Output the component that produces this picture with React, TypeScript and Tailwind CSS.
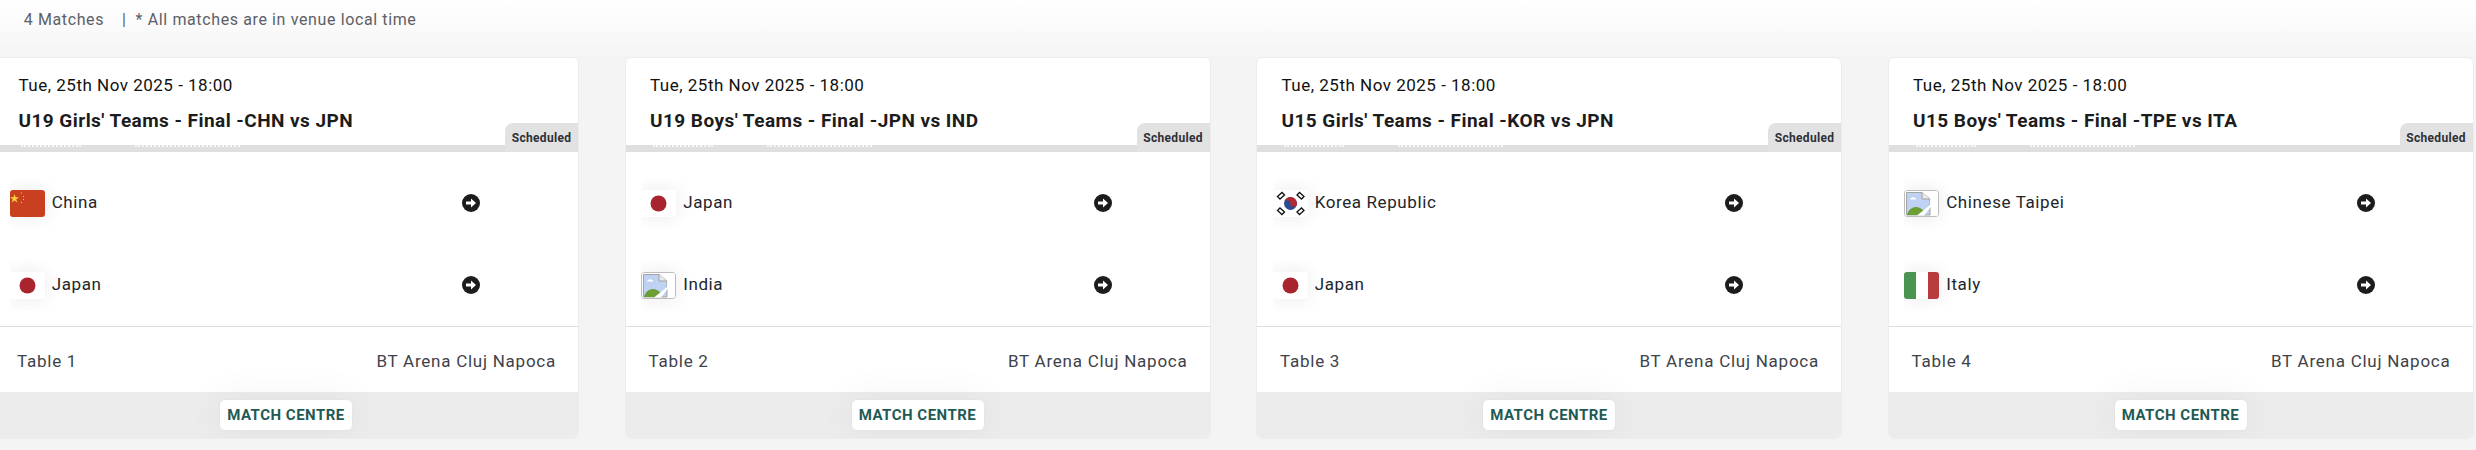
import React from 'react';

const matches = [
  { title: "U19 Girls' Teams - Final -CHN vs JPN", home: 'China', away: 'Japan', table: 'Table 1' },
  { title: "U19 Boys' Teams - Final -JPN vs IND", home: 'Japan', away: 'India', table: 'Table 2' },
  { title: "U15 Girls' Teams - Final -KOR vs JPN", home: 'Korea Republic', away: 'Japan', table: 'Table 3' },
  { title: "U15 Boys' Teams - Final -TPE vs ITA", home: 'Chinese Taipei', away: 'Italy', table: 'Table 4' },
];

function Flag({ name }: { name: string }) {
  switch (name) {
    case 'China':
      return (
        <svg viewBox="0 0 35 27" className="block w-full h-full">
          <rect width="35" height="27" fill="#c8401f" />
          <polygon points="4.5,4 5.6,7.2 9,7.2 6.3,9.2 7.3,12.4 4.5,10.5 1.7,12.4 2.7,9.2 0,7.2 3.4,7.2" fill="#f4d23c" />
          <rect x="11" y="2.5" width="1" height="1" fill="#f4d23c" />
          <rect x="13" y="6" width="1" height="1" fill="#f4d23c" />
          <rect x="13" y="9" width="1" height="1" fill="#f4d23c" />
          <rect x="11" y="12" width="1" height="1" fill="#f4d23c" />
        </svg>
      );
    case 'Japan':
      return (
        <svg viewBox="0 0 35 27" className="block w-full h-full">
          <rect width="35" height="27" fill="#ffffff" />
          <circle cx="17.5" cy="13.5" r="8" fill="#a9252e" />
        </svg>
      );
    case 'Korea Republic':
      return (
        <svg viewBox="0 0 35 27" className="block w-full h-full">
          <rect width="35" height="27" fill="#ffffff" />
          <circle cx="17.5" cy="13.5" r="6.5" fill="#2b4a8f" />
          <path d="M11 13.5a6.5 6.5 0 0 1 13 0a3.25 3.25 0 0 1-6.5 0a3.25 3.25 0 0 0-6.5 0z" fill="#b5282f" />
          <g fill="none" stroke="#111111" strokeWidth="1.3">
            <path d="M4.5 6.5L9 2.5L11.5 5L7 9z" />
            <path d="M24 5l2.5-2.5L31 6.5L28.5 9z" />
            <path d="M4.5 20.5L7 18l4.5 4L9 24.5z" />
            <path d="M24 22l4.5-4L31 20.5L26.5 24.5z" />
          </g>
        </svg>
      );
    case 'Italy':
      return (
        <div className="flex h-full w-full">
          <div className="flex-1 bg-[#4b9350]" />
          <div className="flex-1 bg-white" />
          <div className="flex-1 bg-[#b83c3e]" />
        </div>
      );
    default:
      // browser's broken image placeholder, stretched to the flag box
      return (
        <svg viewBox="0 0 35 27" preserveAspectRatio="none" className="block w-full h-full">
          <rect x="0.5" y="0.5" width="34" height="26" rx="2" fill="#ffffff" stroke="#bdbdbd" />
          <path d="M2.5 2.5H18L26 9V25H2.5z" fill="#bfd2f3" stroke="#a3a3a3" />
          <path d="M6 9.5c1-3 5-3 6.5 0z" fill="#ffffff" />
          <path d="M3 25c1-5 5-8 9-8c3 0 6 2 8 4l-4 4z" fill="#6b9f35" />
          <path d="M13 25.5L26 15V11L26.5 9L33 9L20 25.5z" fill="#ffffff" />
          <path d="M18 2.5V9H26" fill="#e9e9e9" stroke="#a3a3a3" />
        </svg>
      );
  }
}

function TeamRow({ name }: { name: string }) {
  return (
    <div className="relative flex h-[82px] items-center pl-[15.7px]">
      <div className="flex items-center gap-[7px] overflow-hidden py-3 pr-6">
        <div className="h-[27px] w-[35px] flex-shrink-0 overflow-hidden rounded-[3px] bg-white shadow-[0_0_20px_rgba(0,0,0,0.09)]">
          <Flag name={name} />
        </div>
        <span className="text-[17px] tracking-[0.6px] text-[#22252b]">{name}</span>
      </div>
      <span className="absolute left-[468px] top-1/2 h-[18px] w-[18px] -translate-y-1/2 rounded-full bg-[#1c1c1c]">
        <svg viewBox="0 0 18 18" className="block h-full w-full">
          <path d="M4 7.5h5V4.5L14 9l-5 4.5v-3H4z" fill="#ffffff" />
        </svg>
      </span>
    </div>
  );
}

function MatchCard({ title, home, away, table }: (typeof matches)[number]) {
  return (
    <div className="h-[382px] overflow-hidden rounded-[6px] border border-[#ececec] bg-white">
      <div className="relative h-[94px] border-b-[7px] border-[#dfdfdf]">
        <div className="pl-[24.5px] pt-[15px] text-[17px] leading-[24px] tracking-[0.5px] text-[#111111]">
          Tue, 25th Nov 2025 - 18:00
        </div>
        <div className="pl-[24.5px] pt-[12px] text-[19px] font-bold leading-[24px] tracking-[0.45px] text-[#1c1c1c]">
          {title}
        </div>
        {/* top edge of white labels that got clipped by the bar */}
        <div className="absolute -bottom-[2px] left-[27px] w-[60px] border-t-2 border-dotted border-white/70" />
        <div className="absolute -bottom-[2px] left-[141px] w-[105px] border-t-2 border-dotted border-white/70" />
        <div className="absolute -bottom-[7px] right-0 flex h-[29px] w-[73px] items-center justify-center rounded-tl-[8px] bg-[#e3e2e2] text-[12px] font-bold tracking-[0.3px] text-[#2d3038]">
          Scheduled
        </div>
      </div>
      <div className="pt-[10px]">
        <TeamRow name={home} />
        <TeamRow name={away} />
      </div>
      <div className="flex h-[66px] items-center justify-between border-t border-[#dddddd] pl-[23px] pr-[22px] pt-[4px] text-[17px] tracking-[0.75px] text-[#3e4249]">
        <span>{table}</span>
        <span>BT Arena Cluj Napoca</span>
      </div>
      <div className="flex h-[47px] items-start justify-center bg-[#ececec] pt-[7px]">
        <button className="flex h-[32px] w-[134px] items-center justify-center rounded-[6px] border border-[#e4e4e4] bg-white text-[15px] font-bold tracking-[0.5px] text-[#1f5a55] shadow-[0_0_40px_rgba(0,0,0,0.06)]">
          MATCH CENTRE
        </button>
      </div>
    </div>
  );
}

export default function App() {
  return (
    <div className="h-[450px] w-[2476px] overflow-hidden bg-gradient-to-b from-white to-[#f5f4f4] to-[60px] font-['Roboto',sans-serif]">
      <div className="flex h-[57px] items-start pl-[23.7px] pt-[8px] text-[16px] leading-[24px] tracking-[0.62px] text-[#5c6066]">
        <span>4 Matches</span>
        <span className="ml-[18px]">|</span>
        <span className="ml-[9px]">* All matches are in venue local time</span>
      </div>
      <div className="-ml-[7px] grid w-[2480.5px] grid-cols-4 gap-x-[45.5px]">
        {matches.map((m) => (
          <MatchCard key={m.table} {...m} />
        ))}
      </div>
    </div>
  );
}
